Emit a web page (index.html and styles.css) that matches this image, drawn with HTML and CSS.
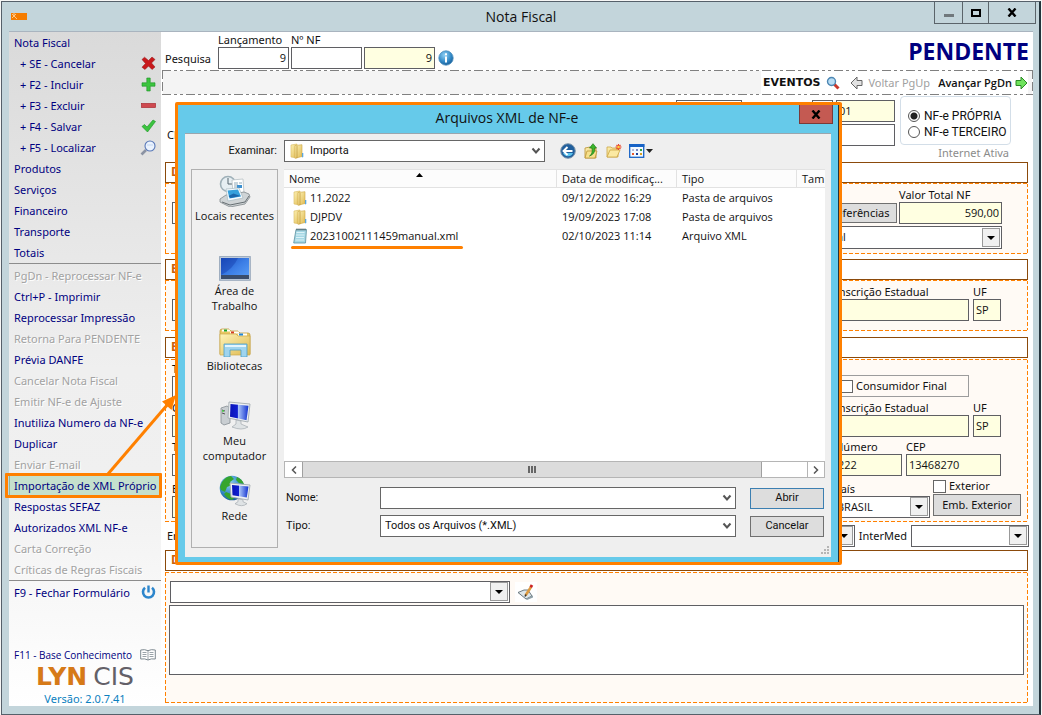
FILE: index.html
```html
<!DOCTYPE html>
<html lang="pt-BR">
<head>
<meta charset="utf-8">
<meta name="viewport" content="width=device-width, initial-scale=1">
<title>Nota Fiscal</title>
<link rel="stylesheet" href="styles.css">
</head>
<body>
<svg class="defs" width="0" height="0" aria-hidden="true">
  <defs>
    <linearGradient id="gold" x1="0" y1="0" x2="1" y2="1"><stop offset="0" stop-color="#fdf3b8"/><stop offset="1" stop-color="#dfb950"/></linearGradient>
    <linearGradient id="screen" x1="0" y1="0" x2="1" y2="1"><stop offset="0" stop-color="#1a4fc0"/><stop offset=".5" stop-color="#3c7ee6"/><stop offset="1" stop-color="#5aa0f8"/></linearGradient>
    <linearGradient id="monitor" x1="0" y1="0" x2="1" y2="0"><stop offset="0" stop-color="#0a14b8"/><stop offset=".4" stop-color="#0f1fd0"/><stop offset=".45" stop-color="#a9c4f8"/><stop offset="1" stop-color="#1030d0"/></linearGradient>
    <radialGradient id="ball" cx=".4" cy=".3" r=".8"><stop offset="0" stop-color="#8fd0f5"/><stop offset=".6" stop-color="#2f86c4"/><stop offset="1" stop-color="#134f86"/></radialGradient>
    <symbol id="folder" viewBox="0 0 14 16"><path d="M1 2l6-1v14l-6-1z" fill="url(#gold)" stroke="#d9b85a" stroke-width=".6"/><path d="M5 2.500l7-.8v11.800l-7 1.800z" fill="url(#gold)" stroke="#cda644" stroke-width=".6"/><path d="M7 3v12" stroke="#b98f2e" stroke-width=".7"/><path d="M12 10h1.300v4l-1.300.5z" fill="#5aa6de"/></symbol>
    <symbol id="tri" viewBox="0 0 19 20"><rect x=".5" y=".5" width="17" height="18" fill="#f0f0f0" stroke="#999"/><path d="M5 8h8l-4 4z" fill="#000"/></symbol>
    <symbol id="chev" viewBox="0 0 10 8"><path d="M1.500 1.500L5 5.500 8.500 1.500" fill="none" stroke="#555" stroke-width="2"/></symbol>
  </defs>
</svg>
<div class="window">
  <header class="titlebar">
    <svg class="app-icon" width="16" height="7" viewBox="0 0 16 7"><rect width="16" height="7" fill="#f57c00"/><path d="M1 1l5 5M5 1L1 5M3 0v2" stroke="#ffd9a8" stroke-width=".8"/></svg>
    <h1>Nota Fiscal</h1>
    <div class="win-buttons">
      <button class="wb-min" aria-label="Minimizar"><svg width="10" height="3"><rect width="10" height="3" fill="#70787c"/></svg></button>
      <button class="wb-max" aria-label="Maximizar"><svg width="10" height="8"><rect x="1" y="1" width="8" height="6" fill="none" stroke="#000" stroke-width="2"/></svg></button>
      <button class="wb-close" aria-label="Fechar"><svg width="10" height="9"><path d="M1.500 .5l7 8M8.500 .5l-7 8" stroke="#000" stroke-width="2.400"/></svg></button>
    </div>
  </header>
  <div class="body">
    <nav class="sidebar">
      <ul class="menu">
        <li><a href="#">Nota Fiscal</a></li>
        <li class="sub"><a href="#">+ SE - Cancelar</a><svg width="15" height="15" viewBox="0 0 15 15"><path d="M1 3.500l2.500-2.300L7.500 4.500 11 1l3 2.500L10.500 7l3.500 4-3 2.500L7.500 10 4 13.500l-3-2.300L4.500 7.500z" fill="#c8191c" stroke="#8e1012" stroke-width=".5"/></svg></li>
        <li class="sub"><a href="#">+ F2 - Incluir</a><svg width="15" height="15" viewBox="0 0 15 15"><path d="M5.800 1h3.400v4.800H14v3.400H9.200V14H5.800V9.200H1V5.800h4.800z" fill="#3cc43f" stroke="#199123" stroke-width=".6"/></svg></li>
        <li class="sub"><a href="#">+ F3 - Excluir</a><svg width="15" height="15" viewBox="0 0 15 15"><rect x=".5" y="5.500" width="14" height="4" fill="#cf4a50" stroke="#a92b32" stroke-width=".7"/></svg></li>
        <li class="sub"><a href="#">+ F4 - Salvar</a><svg width="15" height="15" viewBox="0 0 15 15"><path d="M1 7.500l2.500-2L6 8l6-7 2.500 1.500L6.500 13z" fill="#3cc43f" stroke="#199123" stroke-width=".6"/></svg></li>
        <li class="sub"><a href="#">+ F5 - Localizar</a><svg width="16" height="16" viewBox="0 0 16 16"><path d="M6 10l-4.500 4.500" stroke="#8b93a3" stroke-width="2.600"/><circle cx="10" cy="6" r="5" fill="#eaf2fd" stroke="#5878b8" stroke-width="1.100"/><path d="M7 5h6" stroke="#c2d6f2"/></svg></li>
        <li><a href="#">Produtos</a></li>
        <li><a href="#">Serviços</a></li>
        <li><a href="#">Financeiro</a></li>
        <li><a href="#">Transporte</a></li>
        <li><a href="#">Totais</a></li>
      </ul>
      <ul class="menu ruled">
        <li class="off"><a href="#">PgDn - Reprocessar NF-e</a></li>
        <li><a href="#">Ctrl+P - Imprimir</a></li>
        <li><a href="#">Reprocessar Impressão</a></li>
        <li class="off"><a href="#">Retorna Para PENDENTE</a></li>
        <li><a href="#">Prévia DANFE</a></li>
        <li class="off"><a href="#">Cancelar Nota Fiscal</a></li>
        <li class="off"><a href="#">Emitir NF-e de Ajuste</a></li>
        <li><a href="#">Inutiliza Numero da NF-e</a></li>
        <li><a href="#">Duplicar</a></li>
        <li class="off"><a href="#">Enviar E-mail</a></li>
        <li class="current"><a href="#">Importação de XML Próprio</a></li>
        <li><a href="#">Respostas SEFAZ</a></li>
        <li><a href="#">Autorizados XML NF-e</a></li>
        <li class="off"><a href="#">Carta Correção</a></li>
        <li class="off"><a href="#">Críticas de Regras Fiscais</a></li>
      </ul>
      <ul class="menu ruled">
        <li><a href="#">F9 - Fechar Formulário</a><svg width="15" height="15" viewBox="0 0 15 15"><path d="M4 2.800a5.500 5.500 0 1 0 7 0" fill="none" stroke="#2d86cc" stroke-width="2.600"/><path d="M7.500 .5v7" stroke="#2d86cc" stroke-width="2.400"/></svg></li>
      </ul>
      <div class="brand">
        <div class="kb"><a href="#">F11 - Base Conhecimento</a><svg width="16" height="12" viewBox="0 0 16 12"><path d="M.7 1q4-1 7.300.7Q11.300 0 15.300 1v9Q11 9.300 8 11 5 9.300.7 10z" fill="#fff" stroke="#7d8990"/><path d="M8 1.700V11M2.500 3.500h4M2.500 5.500h4M2.500 7.500h4M9.500 3.500h4M9.500 5.500h4M9.500 7.500h4" stroke="#8e999f" stroke-width=".9"/></svg></div>
        <div class="logo"><b>LYN</b><span>CIS</span></div>
        <div class="version">Versão: 2.0.7.41</div>
      </div>
    </nav>
    <main class="main">
      <div class="search">
        <span class="search-label">Pesquisa</span>
        <div class="field w71"><label for="lanc">Lançamento</label><input id="lanc" class="num" value="9"></div>
        <div class="field w71"><label for="nnf">Nº NF</label><input id="nnf"></div>
        <div class="field w71"><input class="num calc" value="9" aria-label="Número atual"></div>
        <svg class="info" width="16" height="16" viewBox="0 0 16 16"><circle cx="8" cy="8" r="7.200" fill="url(#ball)" stroke="#4c8fbf" stroke-width=".8"/><rect x="7" y="6.500" width="2" height="6" fill="#fff"/><rect x="7" y="3.300" width="2" height="2" fill="#fff"/></svg>
        <strong class="status">PENDENTE</strong>
      </div>
      <div class="toolbar">
        <button class="events">EVENTOS <svg width="14" height="14" viewBox="0 0 14 14"><path d="M8 8l4.500 4.500" stroke="#c8372b" stroke-width="3"/><circle cx="5.500" cy="5.500" r="4" fill="#b9def5" stroke="#4d87b3" stroke-width="1.400"/></svg></button>
        <button class="prev"><svg width="13" height="14" viewBox="0 0 13 14"><path d="M1 7l6-6v3.500h5v5H7V13z" fill="#e2e2e2" stroke="#666"/></svg>Voltar PgUp</button>
        <button class="next">Avançar PgDn<svg width="13" height="14" viewBox="0 0 13 14"><path d="M12 7L6 1v3.500H1v5h5V13z" fill="#6ee35c" stroke="#2a8a25"/></svg></button>
      </div>
      <div class="top-block">
        <div class="top-rows">
          <div class="row end"><input class="w66" aria-label="Data"><input class="w21 after" aria-label="Série"><input class="w59 calc" value="01" aria-label="Modelo"></div>
          <div class="row"><label for="cli">Cl</label><input id="cli" class="grow"></div>
        </div>
        <div class="kind">
          <fieldset>
            <label><input type="radio" name="kind" checked>NF-e PRÓPRIA</label>
            <label><input type="radio" name="kind">NF-e TERCEIRO</label>
          </fieldset>
          <p>Internet Ativa</p>
        </div>
      </div>

      <h2>D</h2>
      <section class="panel p1">
        <div class="row">
          <div class="field w120"><label>&nbsp;</label><input aria-label="Código"></div>
          <div class="right">
            <button class="btn w75">Referências</button>
            <div class="field w103"><label for="vt">Valor Total NF</label><input id="vt" class="num calc" value="590,00"></div>
          </div>
        </div>
        <div class="row end"><div class="pick w400 tall"><select aria-label="Operação" class="align-end"><option>al</option></select><svg width="19" height="20"><use href="#tri"/></svg></div></div>
      </section>

      <h2 class="gap5">E</h2>
      <section class="panel p2">
        <div class="row">
          <div class="field w120"><label>&nbsp;</label><input aria-label="Emitente"></div>
          <div class="right">
            <div class="field w134"><label for="ie1">Inscrição Estadual</label><input id="ie1" class="calc"></div>
            <div class="field w28"><label for="uf1">UF</label><input id="uf1" class="calc" value="SP"></div>
          </div>
        </div>
      </section>

      <h2 class="gap6">E</h2>
      <section class="panel p3">
        <div class="row">
          <div class="field w120"><label for="t1">T</label><input id="t1"></div>
          <div class="right cf"><label class="check-box"><input type="checkbox">Consumidor Final</label></div>
        </div>
        <div class="row">
          <div class="field w120"><label for="c1">C</label><input id="c1" class="calc"></div>
          <div class="right">
            <div class="field w134"><label for="ie2">Inscrição Estadual</label><input id="ie2" class="calc"></div>
            <div class="field w28"><label for="uf2">UF</label><input id="uf2" class="calc" value="SP"></div>
          </div>
        </div>
        <div class="row">
          <div class="field w120"><label for="t2">T</label><input id="t2"></div>
          <div class="right">
            <div class="field w67"><label for="num">Número</label><input id="num" class="calc" value="222"></div>
            <div class="field w95"><label for="cep">CEP</label><input id="cep" class="calc" value="13468270"></div>
          </div>
        </div>
        <div class="row wide">
          <div class="field w120"><label for="e1">E</label><input id="e1" class="calc"></div>
          <div class="right">
            <div class="field w96"><label for="pais">País</label><div class="pick"><select id="pais"><option>BRASIL</option></select><svg width="19" height="20"><use href="#tri"/></svg></div></div>
            <div class="ext"><label><input type="checkbox">Exterior</label><button class="btn">Emb. Exterior</button></div>
          </div>
        </div>
      </section>

      <div class="row inter">
        <label for="ent">En</label>
        <div class="pick ent"><select id="ent"></select><svg width="19" height="20"><use href="#tri"/></svg></div>
        <label for="im">InterMed</label>
        <div class="pick w118"><select id="im"></select><svg width="19" height="20"><use href="#tri"/></svg></div>
      </div>

      <h2 class="gap3">D</h2>
      <section class="panel p4">
        <div class="row">
          <div class="pick w340"><select aria-label="Modelo de dados"></select><svg width="19" height="20"><use href="#tri"/></svg></div>
          <button class="edit" aria-label="Editar"><svg width="18" height="16" viewBox="0 0 18 16"><path d="M1 8.500l6-2.500h4l4 6-6 3z" fill="#dde6ea" stroke="#5c6b72" stroke-width=".9"/><path d="M9 15l7-3.500v2L10 16z" fill="#8fa0a8"/><path d="M8.500 11.500L14 3" stroke="#dc9a40" stroke-width="2.600"/><path d="M8 12.500l1-2" stroke="#333" stroke-width="1.500"/><path d="M13.700 3.300l1.300-2.300" stroke="#c22" stroke-width="2.800"/></svg></button>
        </div>
        <textarea aria-label="Dados adicionais"></textarea>
      </section>
    </main>
  </div>
</div>

<div class="dialog" role="dialog" aria-label="Arquivos XML de NF-e">
  <header><h3>Arquivos XML de NF-e</h3><button class="dlg-close" aria-label="Fechar"><svg width="10" height="9"><path d="M1.500 .5l7 8M8.500 .5l-7 8" stroke="#000" stroke-width="2.400"/></svg></button></header>
  <div class="client">
    <div class="lookin">
      <label for="look">Examinar:</label>
      <div class="combo"><svg class="lead" width="14" height="16"><use href="#folder"/></svg><select id="look" class="with-icon"><option>Importa</option></select><svg class="arrow" width="10" height="8"><use href="#chev"/></svg></div>
      <div class="tools">
        <button aria-label="Voltar"><svg width="16" height="16" viewBox="0 0 16 16"><circle cx="8" cy="8" r="7.300" fill="#215f9d" stroke="#7d96ab"/><path d="M3 10a5.500 5.500 0 0 0 10 0z" fill="#5cc4ee"/><path d="M3.500 8h9M7.500 4L3.500 8l4 4" fill="none" stroke="#fff" stroke-width="1.900"/></svg></button>
        <button aria-label="Acima"><svg width="16" height="16" viewBox="0 0 16 16"><path d="M2 5l5-1 1 1h5v10H2z" fill="url(#gold)" stroke="#b98f2e" stroke-width=".8"/><path d="M2 15l2-7h10l-2 7z" fill="#f7e08c" stroke="#b98f2e" stroke-width=".7"/><path d="M6.500 13q3.500-2 2.500-8H6.500L10 .7 13.500 5h-2q1 6-5 8z" fill="#3cb62c" stroke="#1d7c18" stroke-width=".7"/></svg></button>
        <button aria-label="Nova pasta"><svg width="16" height="16" viewBox="0 0 16 16"><path d="M1 4h4l1 1h6v9H1z" fill="url(#gold)" stroke="#cda644" stroke-width=".8"/><path d="M1 14l3-7h10l-3 7z" fill="#fbe9a2" stroke="#cda644" stroke-width=".8"/><path d="M12.500 1v6M9.500 4h6M10.500 2l4 4M14.500 2l-4 4" stroke="#e8442a" stroke-width="1.100"/><circle cx="12.500" cy="4" r="1.300" fill="#ffd23f"/></svg></button>
        <button aria-label="Exibir"><svg width="25" height="14" viewBox="0 0 25 14"><rect x=".7" y=".7" width="14" height="12.600" fill="#f4f9ff" stroke="#1763c6" stroke-width="1.300"/><rect y="0" width="15.400" height="3" fill="#1763c6"/><path d="M3 5h2v2H3z" fill="#b0b8d8"/><path d="M7 5h2v2H7z" fill="#7a88c0"/><path d="M11 5h2v2h-2z" fill="#2ea043"/><path d="M3 9h2v2H3z" fill="#e8582a"/><path d="M7 9h2v2H7z" fill="#1a3f9c"/><path d="M11 9h2v2h-2z" fill="#d8a020"/><path d="M17 5h7l-3.500 4z" fill="#222"/></svg></button>
      </div>
    </div>
    <div class="panes">
      <ul class="places">
        <li><svg width="32" height="32" viewBox="0 0 32 32"><circle cx="9" cy="9" r="7.500" fill="#e6eef2" stroke="#9fb0b8" stroke-width="1.600"/><path d="M9 3v6h4" fill="none" stroke="#54656e"/><path d="M13 5l11-1 1 14-11 1z" fill="#fff" stroke="#b8c0c4" stroke-width=".8"/><path d="M15 8h4M15 10h4M20 8h3M15 12h8" stroke="#8fa8b8"/><path d="M18 10h5v3h-5z" fill="#3d90d0"/><path d="M1 24l6-4 18-3 5 2 1 3-5 7-15 3-10-5z" fill="#cfd4d6" stroke="#80888c" stroke-width=".8"/><path d="M3 27l8 3 15-3 4-6" fill="none" stroke="#666e72"/><path d="M7 14l13-1 4 10-15 3z" fill="#f6fbff" stroke="#9cb0b8" stroke-width=".6"/><path d="M8.500 15.500l10.500-1 3 7-11.500 2z" fill="#35a0dc"/><path d="M9.500 21l5-2.500 7 2.500-10 2z" fill="#1b67ac"/></svg>Locais recentes</li>
        <li><svg width="32" height="32" viewBox="0 0 32 32"><rect x=".7" y="6.700" width="30.500" height="23.500" fill="#cfdbe8" stroke="#98a8bb" stroke-width="1.200"/><rect x="2" y="8" width="28" height="21" fill="url(#screen)"/><path d="M2 8h17Q14 19 2 25z" fill="#173fae" opacity=".45"/><rect x="2" y="25" width="28" height="4" fill="#3a4d6c"/></svg>Área de<br>Trabalho</li>
        <li><svg width="32" height="32" viewBox="0 0 32 32"><path d="M1 6q0-2 2-2h7l2 2h7l2 2h8q2 0 2 2v19H1z" fill="#e9c864" stroke="#c19c3c" stroke-width=".8"/><path d="M3 4.500h8v2H3z" fill="#fff"/><path d="M5 4.500h3v2H5z" fill="#19a42a"/><path d="M11 6.500h9v2h-9z" fill="#fff"/><path d="M12 6.500h3v2h-3z" fill="#d43a22"/><path d="M1 9h16l2 2h12v19H1z" fill="url(#gold)" stroke="#cba94c" stroke-width=".7"/><path d="M19 8.500h9v2h-9z" fill="#fff"/><path d="M20 8.500h4v2h-4z" fill="#2286d8"/><path d="M5 19h23v13h-6v-7H11v7H5z" fill="#9fd4ee" stroke="#4b9fc8" stroke-width=".8"/><path d="M6 21h21" stroke="#e4f5fd" stroke-width="2"/></svg>Bibliotecas</li>
        <li><svg width="32" height="32" viewBox="0 0 32 32"><path d="M2 8l6-2 3 2v15l-6 2-3-2z" fill="#c9ced2" stroke="#858d93" stroke-width=".8"/><path d="M3 10l3 1M3 13l3 1" stroke="#555"/><circle cx="4" cy="11" r="1" fill="#4c4"/><path d="M10 2l21 2-2 18-20-4z" fill="#eef1f3" stroke="#a3abb0" stroke-width=".9"/><path d="M11.500 4l18 1.700-2 14.500-16.500-3.500z" fill="url(#monitor)"/><path d="M17 20l5 1v3l7 3q-6 4-16 0l4-3z" fill="#dfe3e5" stroke="#a3abb0" stroke-width=".7"/></svg>Meu<br>computador</li>
        <li><svg width="32" height="32" viewBox="0 0 32 32"><circle cx="13" cy="13" r="12.300" fill="url(#ball)"/><path d="M3 7q4-6 9-6l3 3-4 3 2 3-5 2-2 5-4-2-1-3zM7 17l5 2 3 4-2 2Q8 24 5 19zM18 2q5 2 7 7l-5-1-3-3z" fill="#36a52e"/><path d="M11 8l20 2-2 15-17-3z" fill="#eef1f3" stroke="#a3abb0" stroke-width=".9"/><path d="M13 10l16.500 1.600-1.700 11-14.300-2.400z" fill="url(#monitor)"/><path d="M19 24l5 .7v2l4 2q-5 4-12 0l3-2z" fill="#dfe3e5" stroke="#a3abb0" stroke-width=".7"/></svg>Rede</li>
      </ul>
      <div class="files">
        <div class="list">
          <table>
            <colgroup><col class="c-name"><col class="c-date"><col class="c-type"><col class="c-size"></colgroup>
            <thead><tr><th class="sorted">Nome<svg width="7" height="4"><path d="M0 4L3.500 0 7 4z"/></svg></th><th>Data de modificaç...</th><th>Tipo</th><th>Tam</th></tr></thead>
            <tbody>
              <tr><td><span class="file"><svg width="14" height="16"><use href="#folder"/></svg>11.2022</span></td><td>09/12/2022 16:29</td><td>Pasta de arquivos</td><td></td></tr>
              <tr><td><span class="file"><svg width="14" height="16"><use href="#folder"/></svg>DJPDV</span></td><td>19/09/2023 17:08</td><td>Pasta de arquivos</td><td></td></tr>
              <tr><td><span class="file marked"><svg width="14" height="16" viewBox="0 0 14 16"><path d="M3 1.500h10.500L12.500 15H.7z" fill="#a5d7e4" stroke="#5c8f9e" stroke-width=".8"/><path d="M3.500 4.500h8M3 7h8.500M3 9.500h8M2.500 12h8.500" stroke="#e2f4f8" stroke-width=".9"/><path d="M3.500 1.500h9.500" stroke="#4a5a60" stroke-width="2" stroke-dasharray="1 1"/></svg>20231002111459manual.xml</span></td><td>02/10/2023 11:14</td><td>Arquivo XML</td><td></td></tr>
            </tbody>
          </table>
        </div>
        <div class="hscroll">
          <button aria-label="Rolar para a esquerda"><svg width="6" height="8"><path d="M5 .5L1.500 4 5 7.500" fill="none" stroke="#555" stroke-width="1.500"/></svg></button>
          <div class="thumb"><i></i><i></i><i></i></div>
          <div class="track"></div>
          <button aria-label="Rolar para a direita"><svg width="6" height="8"><path d="M1 .5L4.500 4 1 7.500" fill="none" stroke="#555" stroke-width="1.500"/></svg></button>
        </div>
        <div class="dlg-form">
          <label for="fname">Nome:</label>
          <div class="combo"><select id="fname"></select><svg class="arrow" width="10" height="8"><use href="#chev"/></svg></div>
          <button class="ok">Abrir</button>
          <label for="ftype">Tipo:</label>
          <div class="combo"><select id="ftype"><option>Todos os Arquivos (*.XML)</option></select><svg class="arrow" width="10" height="8"><use href="#chev"/></svg></div>
          <button>Cancelar</button>
        </div>
      </div>
    </div>
    <svg class="grip" width="9" height="9"><path d="M7 1h2M4 4h2M7 4h2M1 7h2M4 7h2M7 7h2" stroke="#b5b5b5" stroke-width="2"/></svg>
  </div>
</div>
<div class="callout"></div>
<svg class="pointer" width="72" height="84" viewBox="0 0 72 84" aria-hidden="true"><path d="M2 81L62 11" stroke="#ff8000" stroke-width="3"/><path d="M70 2L65.500 17 56 8.500z" fill="#ff8000"/></svg>
</body>
</html>
```
FILE: styles.css
```css
* { box-sizing: border-box; }
:root {
  --ui: "Noto Sans", "Open Sans", sans-serif;
  --segoe: "Open Sans", "Noto Sans", sans-serif;
  --orange: #ff8000;
  --line: #5f5f63;
}
body { margin: 0; background: #f7f7f6; font: 11px/14px var(--ui); color: #111; position: relative; overflow: hidden; }
.defs { position: absolute; }
h1, h2, h3, p, ul, fieldset { margin: 0; padding: 0; font-weight: 400; }
ul { list-style: none; }
svg { flex: none; display: block; }
button, input, select, textarea { font: inherit; color: inherit; margin: 0; border-radius: 0; }
button { padding: 0; border: 0; background: none; display: flex; align-items: center; justify-content: center; }
a { color: inherit; text-decoration: none; }

.window { margin: 1px 1px 0; min-height: calc(100vh - 1px); background: #c3d5db; border: 1px solid #56606a; border-right: 2px solid #24343c; display: flex; flex-direction: column; }
.titlebar { height: 29px; display: grid; grid-template-columns: 1fr auto 1fr; align-items: center; padding: 0 8px 0 9px; }
.titlebar h1 { font: 14px/20px var(--segoe); }
.win-buttons { justify-self: end; align-self: start; display: flex; border: 1px solid #5b646a; border-top: 0; margin-right: -5px; }
.win-buttons button { height: 21px; border-right: 1px solid #5b646a; }
.wb-min { width: 28px; padding-top: 5px; }
.wb-max { width: 26px; }
.win-buttons .wb-close { width: 46px; border-right: 0; }
.body { flex: 1; display: grid; grid-template-columns: 152px 1fr; margin: 0 6px 8px 7px; background: #fff; border-top: 1px solid #a9b4bf; }

.sidebar { display: flex; flex-direction: column; color: #000080; background: linear-gradient(#dadada, #efefef 50%, #f0f0f0 66%, #fff); }
.menu li { height: 21px; display: flex; align-items: center; justify-content: space-between; padding: 0 5px; white-space: nowrap; }
.menu .sub { padding-left: 11px; }
.menu .off { color: #a2a2a2; text-shadow: 1px 1px #fff; }
.menu .current { background: #c5e0cd; border-left: 1px solid #8fb89c; padding-left: 4px; }
.ruled { border-top: 1px solid #8c8c8c; padding-top: 1px; }
.brand { margin-top: auto; }
.kb { display: flex; align-items: center; justify-content: space-between; padding: 0 5px; font: 10px/14px var(--segoe); white-space: nowrap; }
.logo { display: flex; justify-content: center; gap: 6px; font: 25px/30px "DejaVu Sans", sans-serif; color: #636068; }
.logo b { color: #d67a18; }
.version { text-align: center; color: #0a80c0; line-height: 14px; }

.main { display: flex; flex-direction: column; padding: 0 5px 3px 4px; min-width: 0; }
.main input, .main select, .main textarea { border: 1px solid var(--line); background: #fff; height: 22px; padding: 0 2px 1px; font-family: var(--segoe); outline: 0; min-width: 0; }
.main input.calc { background: #ffffe1; }
.main .num { text-align: right; }
.search { display: flex; align-items: flex-end; gap: 2px; height: 37px; }
.search-label { width: 51px; line-height: 20px; }
.field { display: flex; flex-direction: column; line-height: 14px; white-space: nowrap; }
.field input { width: 100%; }
.info { margin: 0 0 3px 1px; }
.status { margin: 0 -1px 1px auto; font: 700 23px/34px var(--segoe); color: #000080; }
.w71 { width: 71px; } .w66 { width: 66px; } .w21 { width: 21px; } .w59 { width: 59px; } .w120 { width: 120px; }
.w75 { width: 75px; } .w96 { width: 96px; } .w103 { width: 103px; } .w400 { width: 400px; } .w134 { width: 134px; } .w28 { width: 28px; }
.w67 { width: 67px; } .w95 { width: 95px; } .w118 { width: 118px; } .w340 { width: 340px; }

.toolbar {
  height: 25px; margin: 1px -5px 0 -3px; padding: 1px 5px 1px 0; display: flex; justify-content: flex-end; align-items: stretch;
  background:
    repeating-linear-gradient(90deg, #808080 0 9px, #fff 9px 12px, #808080 12px 15px, #fff 15px 18px, #808080 18px 21px, #fff 21px 24px) top / 100% 1px no-repeat,
    repeating-linear-gradient(90deg, #808080 0 9px, #fff 9px 12px, #808080 12px 15px, #fff 15px 18px, #808080 18px 21px, #fff 21px 24px) bottom / 100% 1px no-repeat,
    repeating-linear-gradient(#808080 0 9px, #fff 9px 12px) left / 1px 100% no-repeat,
    repeating-linear-gradient(#808080 0 9px, #fff 9px 12px) right / 1px 100% no-repeat,
    #f4f4f4;
}
.toolbar button { background: #fff; padding: 0 2px; gap: 5px; white-space: nowrap; }
.toolbar .events { font: 700 11px/14px "DejaVu Sans", sans-serif; gap: 6px; padding-right: 8px; }
.toolbar .prev { color: #a0a0a0; padding-right: 6px; }
.toolbar .next { font-family: var(--segoe); font-weight: 600; gap: 3px; padding-right: 0; }

.top-block { display: grid; grid-template-columns: 1fr 111px; gap: 5px; padding-right: 17px; height: 66px; margin-top: 1px; }
.top-rows { display: grid; grid-template-rows: 22px 22px; row-gap: 2px; padding-top: 4px; }
.row { display: flex; align-items: flex-end; }
.top-rows .row { align-items: center; padding-left: 2px; gap: 3px; }
.end { justify-content: flex-end; }
.w21.after { margin-left: 67px; }
.grow { flex: 1; }
.kind fieldset { height: 49px; border: 1px solid #d3dee8; border-radius: 4px; padding: 11px 0 0 7px; font: 12px/16px Roboto, sans-serif; white-space: nowrap; }
.kind label { display: flex; align-items: center; gap: 4px; height: 16px; }
.main .kind input { width: 12px; height: 12px; margin: 0; appearance: none; border-radius: 50%; border: 1px solid #555; padding: 0; }
.main .kind input:checked { background: radial-gradient(#222 0 3px, #fff 4px); }
.kind p { color: #8b8b8b; text-align: right; padding-right: 2px; line-height: 16px; }

h2 { height: 21px; border: 1px solid #8b4a0b; color: #c8600c; font: 700 12px/18px var(--segoe); padding-left: 5px; background: #fff; }
.gap5 { margin-top: 5px; } .gap6 { margin-top: 6px; } .gap3 { margin-top: 3px; }
.panel {
  border: 1px solid transparent; padding-left: 6px; padding-right: 26px; display: flex; flex-direction: column;
  background:
    repeating-linear-gradient(90deg, var(--orange) 0 4px, #fffaf5 4px 6px) top / 100% 1px no-repeat border-box,
    repeating-linear-gradient(90deg, var(--orange) 0 4px, #fffaf5 4px 6px) bottom / 100% 1px no-repeat border-box,
    repeating-linear-gradient(var(--orange) 0 4px, #fffaf5 4px 6px) left / 1px 100% no-repeat border-box,
    repeating-linear-gradient(var(--orange) 0 4px, #fffaf5 4px 6px) right / 1px 100% no-repeat border-box,
    #fffaf5;
}
.right { margin-left: auto; display: flex; align-items: flex-end; gap: 4px; }
.p1 { height: 71px; padding-top: 4px; gap: 2px; padding-right: 25px; }
.p1 .right { gap: 2px; }
.p1 .btn { height: 20px; margin-bottom: 1px; }
.p2 { height: 51px; padding-top: 4px; }
.p3 { height: 163px; padding-top: 2px; gap: 3px; margin-top: 1px; }
.p4 { height: 131px; padding: 8px 3px 0; margin-top: 1px; gap: 2px; }
.btn { border: 1px solid #707070; background: #dddddd; height: 21px; white-space: nowrap; }
.check-box { display: flex; align-items: center; gap: 3px; border: 1px solid #9c9c9c; width: 134px; height: 22px; padding-left: 4px; white-space: nowrap; }
.cf { padding-right: 32px; padding-bottom: 1px; }
.main input[type="checkbox"] { appearance: none; width: 13px; height: 13px; border: 1px solid #666; padding: 0; }
.wide { margin-right: -20px; }
.wide .right { gap: 3px; }
.ext { width: 88px; display: flex; flex-direction: column; gap: 1px; padding-bottom: 2px; }
.ext label { display: flex; align-items: center; gap: 3px; line-height: 14px; }
.ext .btn { height: 22px; width: 100%; }
.pick { display: grid; }
.pick > *, .combo > * { grid-area: 1 / 1; }
.pick select, .combo select { appearance: none; width: 100%; }
.pick svg { justify-self: end; align-self: center; margin-right: 1px; pointer-events: none; }
.main .tall select { height: 23px; }
.main .align-end { padding-left: 234px; }
.inter { margin: 3px -1px 0 2px; gap: 4px; align-items: center; line-height: 20px; }
.ent { flex: 1; }
.p4 .row { padding-left: 1px; align-items: center; gap: 5px; }
.edit { background: #fff; width: 22px; height: 20px; }
.main textarea { height: 70px; width: 100%; resize: none; display: block; }

.dialog { position: absolute; left: 175px; top: 102px; width: 667px; height: 463px; border: 3px solid var(--orange); border-radius: 2px; background: #66caea; font-family: var(--segoe); display: flex; flex-direction: column; padding: 0 8px 5px 7px; box-shadow: inset -1px 0 #24343c; }
.dialog header { height: 28px; flex: none; display: grid; grid-template-columns: 1fr; align-items: center; }
.dialog header > * { grid-area: 1 / 1; }
.dialog h3 { font: 14px/24px var(--segoe); text-align: center; padding: 0 2px 2px 0; }
.dlg-close { width: 34px; height: 19px; background: #c45a52; border: 1px solid #7b3a38; border-top: 0; justify-self: end; align-self: start; margin-right: -2px; }
.client { flex: 1; min-height: 0; background: #efefef; border-top: 1px solid #9aa6ae; padding: 6px 6px 9px; display: flex; flex-direction: column; gap: 7px; position: relative; }
.lookin { display: grid; grid-template-columns: 86px 261px 1fr; gap: 7px; align-items: center; font-family: Roboto, sans-serif; height: 22px; }
.lookin label { text-align: right; }
.combo { display: grid; align-items: center; font-family: Roboto, sans-serif; }
.combo select { height: 22px; border: 1px solid #666; background: #fff; padding: 0 4px; outline: 0; }
.combo .with-icon { padding-left: 25px; }
.combo svg { z-index: 1; pointer-events: none; }
.lead { margin-left: 6px; }
.arrow { justify-self: end; margin-right: 4px; }
.tools { display: flex; gap: 7px; padding-left: 8px; }
.panes { flex: 1; min-height: 0; display: grid; grid-template-columns: 87px 1fr; gap: 6px; }
.places { border: 1px solid #b0b0b0; padding-top: 5px; background: #f0f0f0; }
.places li { height: 75px; text-align: center; line-height: 15px; white-space: nowrap; }
.places li:last-child { height: 70px; }
.places svg { margin: 0 auto 1px; }
.files { display: flex; flex-direction: column; min-width: 0; }
.list { background: #fff; height: 292px; overflow: hidden; }
table { table-layout: fixed; width: 100%; border-collapse: separate; border-spacing: 0; }
.c-name { width: 273px; } .c-date { width: 120px; } .c-type { width: 120px; }
th, td { padding: 0 0 0 5px; text-align: left; font-weight: 400; height: 19px; white-space: nowrap; overflow: hidden; line-height: 16px; }
th { background: #fcfcfc; border: solid #e2e2e2; border-width: 1px 1px 1px 0; position: relative; }
th:last-child { border-right: 0; }
th.sorted svg { position: absolute; left: 132px; top: 3px; }
.file { display: flex; align-items: center; gap: 3px; padding-left: 4px; position: relative; }
td:first-child { overflow: visible; }
.marked::after { content: ""; position: absolute; left: 2px; top: 18px; width: 172px; height: 3px; border-radius: 2px; background: var(--orange); }
.hscroll { height: 17px; display: grid; grid-template-columns: 17px 1fr 45px 17px; background: #fff; border: 1px solid #b5b5b5; }
.thumb { background: #dcdcdc; border: solid #a0a0a0; border-width: 0 1px; display: flex; align-items: center; justify-content: center; gap: 1px; }
.thumb i { width: 2px; height: 7px; background: #666; }
.hscroll button:last-child { border-left: 1px solid #b5b5b5; }
.dlg-form { display: grid; grid-template-columns: 96px 1fr 74px; row-gap: 6px; align-items: center; margin-top: 9px; font-family: Roboto, sans-serif; padding-right: 1px; }
.dlg-form label { padding-left: 2px; }
.dlg-form .combo { margin-right: 14px; }
.dlg-form button { height: 21px; background: #dddddd; border: 1px solid #707070; }
.dlg-form .ok { border-color: #3c7fb1; }
.grip { position: absolute; right: 2px; bottom: 2px; }

.callout { position: absolute; left: 5px; top: 473px; width: 157px; height: 25px; border: 3px solid var(--orange); border-radius: 1px; }
.pointer { position: absolute; left: 106px; top: 393px; }
```
